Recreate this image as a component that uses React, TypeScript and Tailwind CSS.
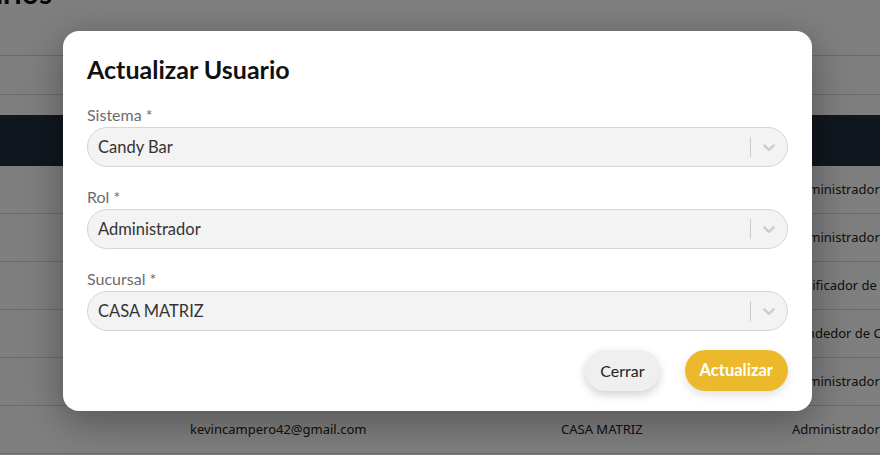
import React from 'react';

const rows = [
  { email: 'admin@candybar.com', branch: 'CASA MATRIZ', role: 'Administrador' },
  { email: 'soporte@candybar.com', branch: 'CASA MATRIZ', role: 'Administrador' },
  { email: 'verificador@candybar.com', branch: 'CASA MATRIZ', role: 'Verificador de Boletos' },
  { email: 'ventas@candybar.com', branch: 'CASA MATRIZ', role: 'Vendedor de Candy' },
  { email: 'gerencia@candybar.com', branch: 'CASA MATRIZ', role: 'Administrador' },
  { email: 'kevincampero42@gmail.com', branch: 'CASA MATRIZ', role: 'Administrador' },
];

const Chevron = () => (
  <svg width="20" height="20" viewBox="0 0 20 20" className="fill-[#cccccc]">
    <path d="M4.516 7.548c0.436-0.446 1.043-0.481 1.576 0l3.908 3.747 3.908-3.747c0.533-0.481 1.141-0.446 1.574 0 0.436 0.445 0.408 1.197 0 1.615-0.406 0.418-4.695 4.502-4.695 4.502-0.217 0.223-0.502 0.335-0.787 0.335s-0.57-0.112-0.789-0.335c0 0-4.287-4.084-4.695-4.502s-0.436-1.17 0-1.615z" />
  </svg>
);

const SelectField: React.FC<{ label: string; value: string }> = ({ label, value }) => (
  <div className="mb-5">
    <label className="block text-[16px] leading-5 text-[#6c6c6c] mb-[2px]">{label}</label>
    <div className="flex items-center h-10 rounded-full border border-[#d6d6d6] bg-[#f3f3f3] pl-[10px]">
      <span className="flex-1 text-[16.5px] text-[#333333]">{value}</span>
      <span className="w-px h-5 bg-[#cccccc]" />
      <span className="px-2 flex items-center">
        <Chevron />
      </span>
    </div>
  </div>
);

export default function App() {
  return (
    <div className="relative w-[880px] h-[455px] overflow-hidden bg-white" style={{ fontFamily: 'Lato, "Noto Sans", sans-serif' }}>
      {/* page behind */}
      <div className="w-[1000px]" style={{ fontFamily: '"Noto Sans", sans-serif' }}>
        <h1 className="text-[30px] font-bold leading-9 -mt-[26px] -ml-[64px] text-[#111111]" style={{ fontFamily: 'Lato, sans-serif' }}>Usuarios</h1>
        <div className="mt-[45px] h-10 border-y border-[#d4d4d4]" />
        <div className="mt-5 h-[51px] bg-[#222f3e]" />
        {rows.map((r, i) => (
          <div key={i} className="flex items-center h-12 border-b border-[#d4d4d4] text-[13px] text-[#222222]">
            <span className="w-[190px]" />
            <span className="w-[371px]">{r.email}</span>
            <span className="w-[231px]">{r.branch}</span>
            <span className="whitespace-nowrap">{r.role}</span>
          </div>
        ))}
      </div>

      {/* overlay */}
      <div className="absolute inset-0 bg-black/50 flex justify-center pt-[31px]">
        <div className="w-[749px] h-[380px] ml-[-5px] bg-white rounded-2xl px-6 pt-6 pb-5 shadow-[0_10px_40px_rgba(0,0,0,0.35)]">
          <h2 className="text-[25px] leading-7 font-bold text-[#111111] mb-[22px]">Actualizar Usuario</h2>
          <SelectField label="Sistema *" value="Candy Bar" />
          <SelectField label="Rol *" value="Administrador" />
          <SelectField label="Sucursal *" value="CASA MATRIZ" />
          <div className="flex justify-end gap-[25px] -mt-[1px]">
            <button className="h-[41px] px-[15px] rounded-full bg-[#efefef] text-[16px] text-[#222222] shadow-[0_4px_10px_rgba(0,0,0,0.18)]">Cerrar</button>
            <button className="h-[41px] px-[15px] rounded-full bg-[#ebb92b] text-[16.5px] font-bold text-white shadow-[0_4px_10px_rgba(0,0,0,0.12)]">Actualizar</button>
          </div>
        </div>
      </div>
    </div>
  );
}
